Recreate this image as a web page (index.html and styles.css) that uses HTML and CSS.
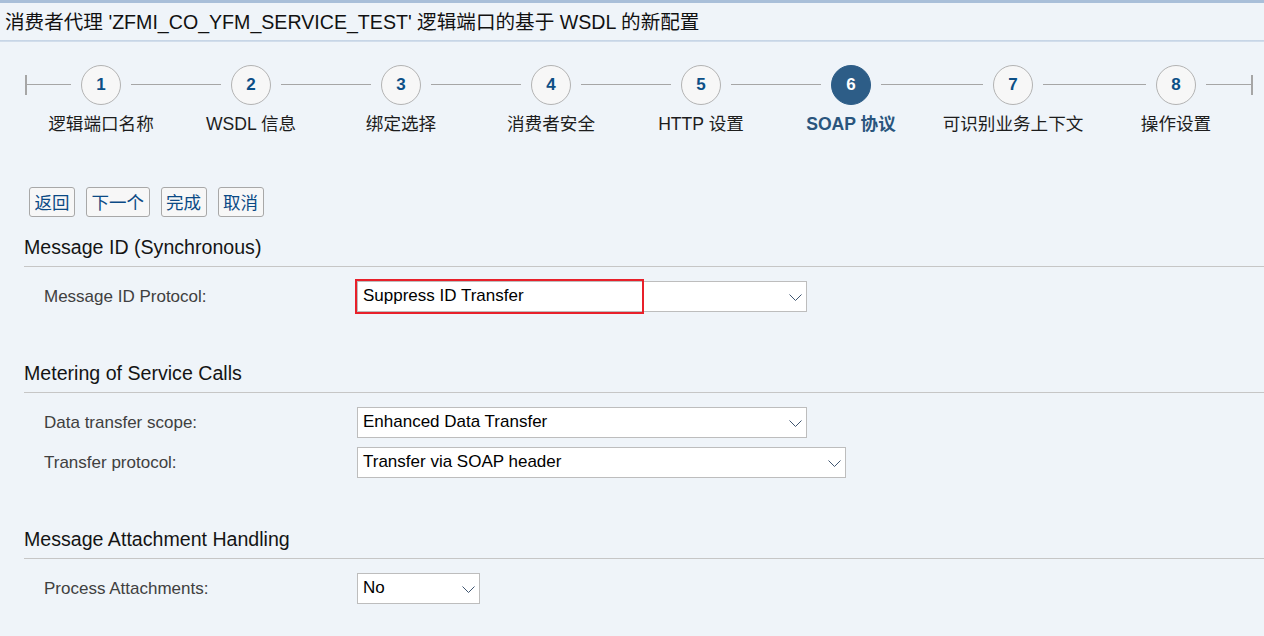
FILE: index.html
```html
<!DOCTYPE html>
<html lang="zh">
<head>
<meta charset="utf-8">
<title>WSDL 配置</title>
<link rel="stylesheet" href="styles.css">
</head>
<body>
<div class="topbar"></div>
<div class="title">消费者代理 'ZFMI_CO_YFM_SERVICE_TEST' 逻辑端口的基于 WSDL 的新配置</div>
<div class="title-rule"></div>

<div class="stepper">
  <span class="tick"></span><span class="seg w44"></span>
  <div class="step"><div class="circle">1</div><div class="label">逻辑端口名称</div></div>
  <span class="seg w90"></span>
  <div class="step"><div class="circle">2</div><div class="label">WSDL 信息</div></div>
  <span class="seg w90"></span>
  <div class="step"><div class="circle">3</div><div class="label">绑定选择</div></div>
  <span class="seg w90"></span>
  <div class="step"><div class="circle">4</div><div class="label">消费者安全</div></div>
  <span class="seg w90"></span>
  <div class="step"><div class="circle">5</div><div class="label">HTTP 设置</div></div>
  <span class="seg w90"></span>
  <div class="step active"><div class="circle">6</div><div class="label">SOAP 协议</div></div>
  <span class="seg w102"></span>
  <div class="step"><div class="circle">7</div><div class="label">可识别业务上下文</div></div>
  <span class="seg w103"></span>
  <div class="step"><div class="circle">8</div><div class="label">操作设置</div></div>
  <span class="seg w45"></span><span class="tick"></span>
</div>

<div class="content">
  <div class="buttons">
    <button class="btn">返回</button>
    <button class="btn">下一个</button>
    <button class="btn">完成</button>
    <button class="btn">取消</button>
  </div>

  <section class="section">
    <h2 class="heading">Message ID (Synchronous)</h2>
    <div class="rows">
      <div class="row">
        <span class="field-label">Message ID Protocol:</span>
        <div class="select w450">
          <span class="value">Suppress ID Transfer</span>
          <svg class="chev" width="13" height="8" viewBox="0 0 13 8"><polyline points="0.5,0.5 6.5,6.5 12.5,0.5" fill="none" stroke="#3f5570" stroke-width="1"/></svg>
          <span class="highlight"></span>
        </div>
      </div>
    </div>
  </section>

  <section class="section">
    <h2 class="heading">Metering of Service Calls</h2>
    <div class="rows">
      <div class="row">
        <span class="field-label">Data transfer scope:</span>
        <div class="select w450">
          <span class="value">Enhanced Data Transfer</span>
          <svg class="chev" width="13" height="8" viewBox="0 0 13 8"><polyline points="0.5,0.5 6.5,6.5 12.5,0.5" fill="none" stroke="#3f5570" stroke-width="1"/></svg>
        </div>
      </div>
      <div class="row">
        <span class="field-label">Transfer protocol:</span>
        <div class="select w489">
          <span class="value">Transfer via SOAP header</span>
          <svg class="chev" width="13" height="8" viewBox="0 0 13 8"><polyline points="0.5,0.5 6.5,6.5 12.5,0.5" fill="none" stroke="#3f5570" stroke-width="1"/></svg>
        </div>
      </div>
    </div>
  </section>

  <section class="section">
    <h2 class="heading">Message Attachment Handling</h2>
    <div class="rows">
      <div class="row">
        <span class="field-label">Process Attachments:</span>
        <div class="select w123">
          <span class="value">No</span>
          <svg class="chev" width="13" height="8" viewBox="0 0 13 8"><polyline points="0.5,0.5 6.5,6.5 12.5,0.5" fill="none" stroke="#3f5570" stroke-width="1"/></svg>
        </div>
      </div>
    </div>
  </section>
</div>
</body>
</html>
```

FILE: styles.css
```css
* { box-sizing: border-box; }

html, body {
  margin: 0;
  padding: 0;
  background: #eff4f9;
  font-family: "Liberation Sans", Arial, "Noto Sans CJK SC", sans-serif;
  color: #000;
  overflow: hidden;
}

.topbar {
  height: 3px;
  background: #a9bfd9;
}

.title {
  height: 37px;
  padding-left: 5px;
  font-size: 19.6px;
  line-height: 38px;
  color: #111;
  white-space: nowrap;
}

.title-rule {
  height: 2px;
  background: linear-gradient(#c2d2e4, #d6e1ed);
}

/* stepper */
.stepper {
  display: flex;
  align-items: flex-start;
  padding-left: 25px;
  margin-top: 23px;
  height: 122px;
}

.tick {
  display: block;
  width: 2px;
  height: 20px;
  margin-top: 10px;
  background: #a6a6a6;
}

.seg {
  display: block;
  height: 1px;
  margin-top: 19px;
  background: #a6a6a6;
}
.w44 { width: 44px; }
.w45 { width: 45px; }
.w90 { width: 90px; }
.w102 { width: 102px; }
.w103 { width: 103px; }

.step {
  width: 40px;
  margin: 0 10px;
  display: flex;
  flex-direction: column;
  align-items: center;
}

.circle {
  width: 40px;
  height: 40px;
  border-radius: 50%;
  border: 1px solid #b3b3b3;
  background: #f7f7f7;
  color: #0d4f86;
  font-weight: bold;
  font-size: 17px;
  line-height: 38px;
  text-align: center;
  flex: none;
}

.label {
  margin-top: 8px;
  white-space: nowrap;
  font-size: 17.6px;
  line-height: 22px;
  color: #1d1d1d;
}

.step.active .circle {
  background: #2d5d87;
  border-color: #2d5d87;
  color: #fff;
}
.step.active .label {
  color: #2a557d;
  font-weight: bold;
}

/* content */
.content {
  padding-left: 24px;
}

.buttons {
  display: flex;
  gap: 11px;
  padding-left: 5px;
}

.btn {
  height: 30px;
  padding: 0 4.5px;
  border: 1px solid #a8a8a8;
  border-radius: 3px;
  background: #f7f7f7;
  color: #0b4a85;
  font-family: "Noto Sans CJK SC", sans-serif;
  font-size: 17.5px;
  line-height: 28px;
}

.section {
  margin-top: 16px;
}
.section + .section {
  margin-top: 47px;
}

.heading {
  margin: 0;
  font-weight: normal;
  font-size: 19.6px;
  line-height: 28px;
  padding-bottom: 5px;
  border-bottom: 1px solid #c6c6c6;
  color: #141414;
}

.rows {
  display: flex;
  flex-direction: column;
  gap: 9px;
  padding-top: 14px;
  padding-left: 20px;
}

.row {
  display: flex;
  align-items: center;
  height: 31px;
}

.field-label {
  width: 313px;
  font-size: 17px;
  color: #404040;
}

.select {
  position: relative;
  height: 31px;
  display: flex;
  align-items: center;
  justify-content: space-between;
  border: 1px solid #bdbdbd;
  background: #fff;
  padding: 0 4px 0 5px;
  font-size: 17px;
  color: #000;
}
.w450 { width: 450px; }
.w489 { width: 489px; }
.w123 { width: 123px; }

.value {
  line-height: 28px;
  padding-bottom: 2px;
}

.chev {
  display: block;
  margin-top: 2px;
}

.highlight {
  position: absolute;
  left: -3px;
  top: -3px;
  width: 289px;
  height: 35px;
  border: 2px solid #e8202a;
}
```
